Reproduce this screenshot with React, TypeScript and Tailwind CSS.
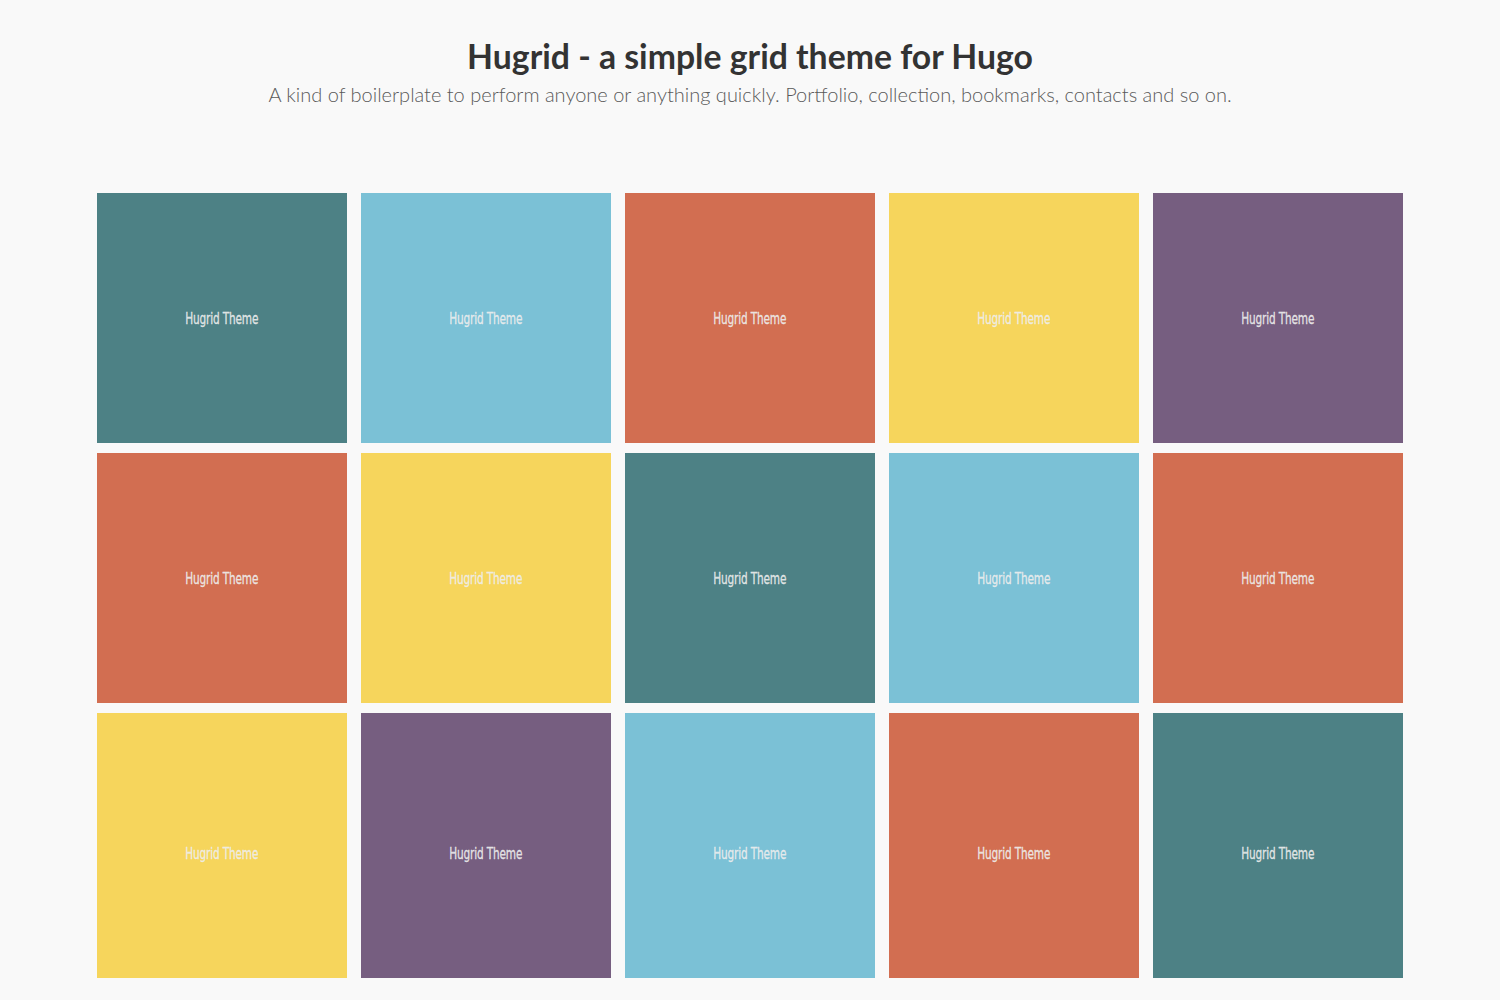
import React from 'react';

const colors = {
  teal: 'bg-[#4d8185]',
  sky: 'bg-[#7bc1d6]',
  coral: 'bg-[#d26e51]',
  yellow: 'bg-[#f6d55c]',
  purple: 'bg-[#765e80]',
};

type Tile = keyof typeof colors;

const rows: Tile[][] = [
  ['teal', 'sky', 'coral', 'yellow', 'purple'],
  ['coral', 'yellow', 'teal', 'sky', 'coral'],
  ['yellow', 'purple', 'sky', 'coral', 'teal'],
];

const Card: React.FC<{ color: Tile; last?: boolean }> = ({ color, last }) => (
  <div
    className={`${colors[color]} w-[250px] ${last ? 'h-[265px] pt-[16px]' : 'h-[250px]'} flex items-center justify-center`}
  >
    <span className="inline-block translate-y-[1px] scale-x-[0.78] text-[#eeeeee]/90 text-[15px] font-['DejaVu_Sans',sans-serif] font-stretch-condensed tracking-[-0.2px] [-webkit-text-stroke:0.3px_currentColor]">
      Hugrid Theme
    </span>
  </div>
);

export default function App() {
  return (
    <div className="min-h-[1000px] bg-[#f9f9f9] font-['Lato',sans-serif] overflow-hidden">
      <header className="pt-[33px] text-center">
        <h1 className="text-[33.75px] font-bold text-[#333] leading-[46px]">Hugrid - a simple grid theme for Hugo</h1>
        <p className="text-[20px] font-light text-[#5a5a5a] leading-[30px]">
          A kind of boilerplate to perform anyone or anything quickly. Portfolio, collection, bookmarks, contacts and so on.
        </p>
      </header>

      <main className="mt-[84px] flex flex-col items-center gap-[10px]">
        {rows.map((row, i) => (
          <div key={i} className="flex gap-[14px]">
            {row.map((c, j) => (
              <Card key={j} color={c} last={i === 2} />
            ))}
          </div>
        ))}
      </main>
    </div>
  );
}
